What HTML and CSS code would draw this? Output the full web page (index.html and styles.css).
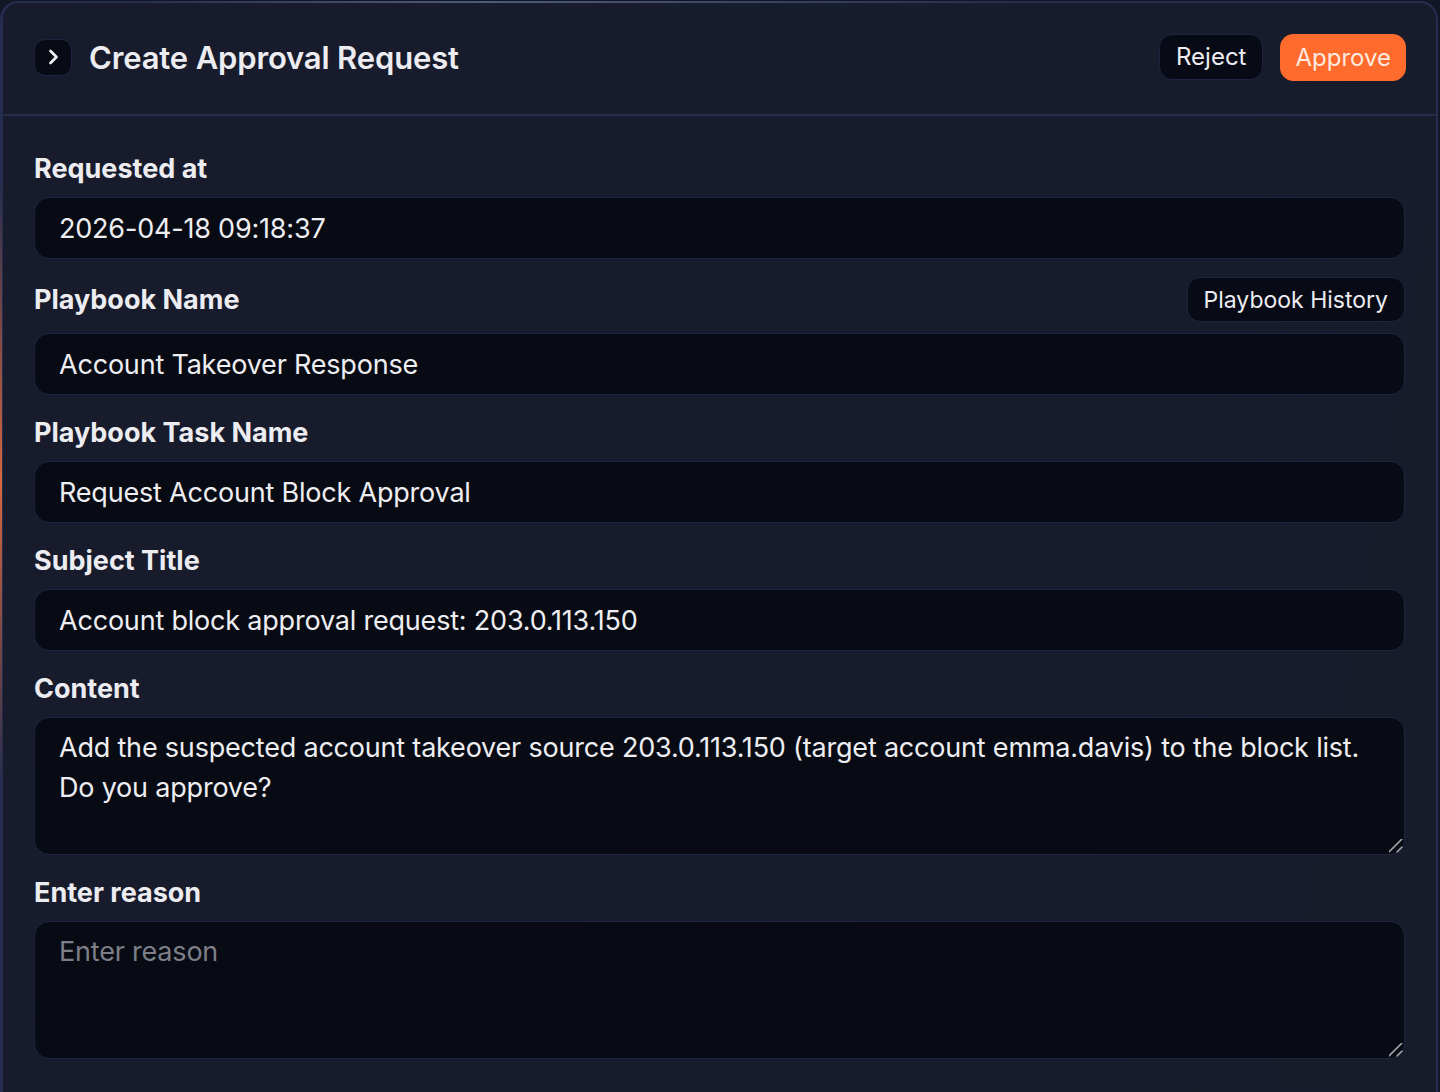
FILE: index.html
```html
<!DOCTYPE html>
<html lang="en">
<head>
  <meta charset="UTF-8">
  <meta name="viewport" content="width=device-width, initial-scale=1.0">
  <title>Create Approval Request</title>
  <link rel="stylesheet" href="styles.css">
</head>
<body>
  <div class="panel">
    <div class="panel-header">
      <div class="header-left">
        <button class="collapse-btn" type="button" aria-label="Collapse">
          <svg width="20" height="20" viewBox="0 0 20 20" fill="none">
            <path d="M7.5 4 L13.5 10 L7.5 16" stroke="#f1f1f4" stroke-width="2.6" stroke-linecap="round" stroke-linejoin="round"/>
          </svg>
        </button>
        <h1>Create Approval Request</h1>
      </div>
      <div class="header-actions">
        <button class="btn btn-dark" type="button">Reject</button>
        <button class="btn btn-primary" type="button">Approve</button>
      </div>
    </div>

    <form class="panel-body">
      <div class="field">
        <label class="field-label">Requested at</label>
        <input class="input" type="text" value="2026-04-18 09:18:37" readonly>
      </div>

      <div class="field">
        <div class="label-row">
          <label class="field-label">Playbook Name</label>
          <button class="btn btn-dark btn-small" type="button">Playbook History</button>
        </div>
        <input class="input" type="text" value="Account Takeover Response" readonly>
      </div>

      <div class="field">
        <label class="field-label">Playbook Task Name</label>
        <input class="input" type="text" value="Request Account Block Approval" readonly>
      </div>

      <div class="field">
        <label class="field-label">Subject Title</label>
        <input class="input" type="text" value="Account block approval request: 203.0.113.150" readonly>
      </div>

      <div class="field">
        <label class="field-label">Content</label>
        <textarea class="input textarea" readonly>Add the suspected account takeover source 203.0.113.150 (target account emma.davis) to the block list. Do you approve?</textarea>
      </div>

      <div class="field">
        <label class="field-label">Enter reason</label>
        <textarea class="input textarea" placeholder="Enter reason"></textarea>
      </div>
    </form>
  </div>
</body>
</html>
```

FILE: styles.css
```css
* {
  margin: 0;
  padding: 0;
  box-sizing: border-box;
}

html,
body {
  height: 100%;
  overflow: hidden;
}

body {
  font-family: 'Inter', 'Noto Sans', sans-serif;
  background-color: #121625;
  color: #ececf1;
}

/* Painel principal */
.panel {
  position: relative;
  margin: 1px 2px 0 0;
  min-height: calc(100% - 1px);
  background: linear-gradient(100deg, #171b2b 0%, #181d2e 55%, #171b2a 100%);
  border: 2px solid #252d4e;
  border-left-width: 3px;
  border-bottom: none;
  border-radius: 18px 18px 0 0;
}

.panel::before {
  content: '';
  position: absolute;
  left: -3px;
  top: 180px;
  width: 2px;
  height: 600px;
  background: linear-gradient(to bottom, rgba(224, 104, 58, 0), #d9673c 50%, rgba(224, 104, 58, 0));
}

.panel::after {
  content: '';
  position: absolute;
  top: -2px;
  left: 120px;
  width: 900px;
  height: 2px;
  background: linear-gradient(to right, rgba(90, 104, 140, 0), #4f5b7e 40%, rgba(90, 104, 140, 0));
}

.panel-header {
  display: flex;
  justify-content: space-between;
  align-items: center;
  height: 113px;
  padding: 0 30px 3px 31px;
  border-bottom: 2px solid #262e4c;
}

.header-left {
  display: flex;
  align-items: center;
  gap: 17px;
}

.collapse-btn {
  display: flex;
  align-items: center;
  justify-content: center;
  width: 38px;
  height: 37px;
  background-color: #080b15;
  border: 1px solid #1d2440;
  border-radius: 11px;
  cursor: pointer;
}

h1 {
  font-size: 31px;
  font-weight: 600;
  color: #ececf1;
  letter-spacing: -0.15px;
}

.header-actions {
  display: flex;
  gap: 17px;
}

.btn {
  height: 46px;
  padding: 0 17px;
  font-family: inherit;
  font-size: 24px;
  color: #ececf1;
  border-radius: 13px;
  cursor: pointer;
}

.btn-dark {
  background-color: #080b15;
  border: 1px solid #1d2440;
}

.header-actions .btn-dark {
  padding: 0 16px;
}

.btn-primary {
  height: 47px;
  padding: 0 14px;
  background-color: #ff6b2c;
  border: 1px solid #ff6b2c;
  color: #fde9df;
}

.btn-small {
  height: 45px;
  padding: 0 16px;
  font-size: 23px;
}

/* Formulario */
.panel-body {
  display: flex;
  flex-direction: column;
  gap: 18px;
  padding: 33px 31px 33px;
}

.field {
  display: flex;
  flex-direction: column;
  gap: 12px;
}

.label-row {
  display: flex;
  justify-content: space-between;
  align-items: center;
}

.label-row + .input {
  margin-top: -1px;
}

.field-label {
  height: 36px;
  padding-top: 4px;
  line-height: 32px;
  font-size: 27px;
  font-weight: 700;
  color: #ececf1;
}

.label-row .field-label {
  padding-top: 2px;
}

.input {
  width: 100%;
  height: 62px;
  padding: 0 24px;
  font-family: inherit;
  font-size: 27px;
  letter-spacing: -0.2px;
  color: #eeeef2;
  background-color: #080b14;
  border: 1px solid #1d2440;
  border-radius: 15px;
  outline: none;
}

.textarea {
  height: 138px;
  padding: 10px 24px;
  line-height: 40px;
  resize: vertical;
}

.textarea::-webkit-resizer {
  background: url("data:image/svg+xml,%3Csvg xmlns='http://www.w3.org/2000/svg' width='16' height='16' viewBox='0 0 16 16'%3E%3Cpath d='M2 15 L15 2 M10 15 L15 10' stroke='%23a3a3a8' stroke-width='1.6' stroke-linecap='round'/%3E%3C/svg%3E") no-repeat right 1px bottom 1px;
}

.textarea::placeholder {
  color: #7c7f88;
}
```
